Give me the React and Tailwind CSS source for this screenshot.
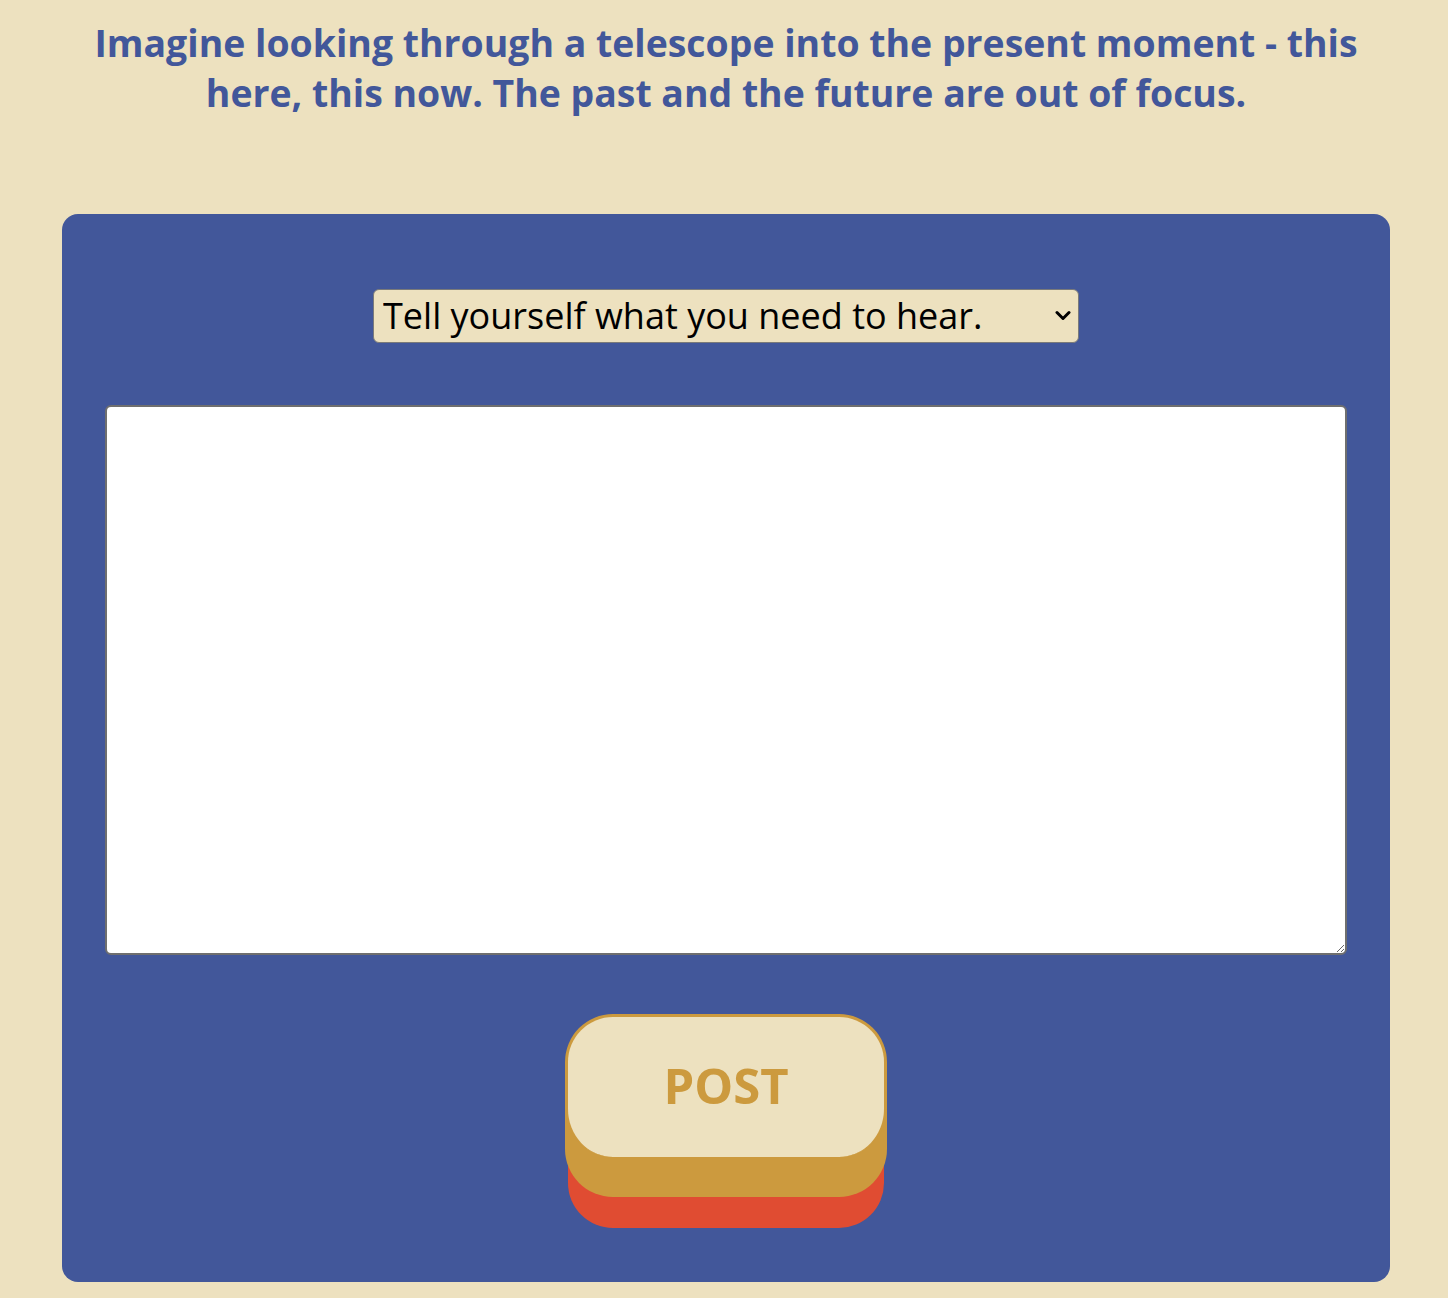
export default function App() {
  return (
    <div className="min-h-[1298px] bg-[#ede1bf] pt-[18px] pb-[16px]" style={{ fontFamily: '"Open Sans", sans-serif' }}>
      <h1 className="ml-[66px] w-[1320px] text-center text-[37.4px] leading-[50px] font-bold text-[#42579a]">
        Imagine looking through a telescope into the present moment - this here, this now. The past and the future are out of focus.
      </h1>
      <div className="ml-[62px] mt-[96px] flex h-[1068px] w-[1328px] flex-col items-center rounded-[16px] bg-[#42579a] px-[43px] pt-[75px]">
        <div className="relative h-[54px] w-[706px]">
          <select
            defaultValue="a"
            className="h-full w-full appearance-none rounded-[6px] border-[1.5px] border-[#7a7a7a] bg-[#ede1bf] pl-[9px] pr-[30px] text-[36px] leading-[48px] text-black"
            style={{ fontFamily: '"Open Sans", sans-serif' }}
          >
            <option value="a">Tell yourself what you need to hear.</option>
          </select>
          <svg
            className="pointer-events-none absolute right-[8px] top-[21px]"
            width="16"
            height="11"
            viewBox="0 0 16 11"
            fill="none"
          >
            <path d="M2 2.5 L8 8.5 L14 2.5" stroke="#000" strokeWidth="3" strokeLinecap="round" strokeLinejoin="round" />
          </svg>
        </div>
        <textarea className="mt-[62px] h-[550px] w-full rounded-[6px] border-2 border-[#6f6f6f] bg-white" />
        <button
          className="mt-[59px] flex h-[143px] w-[322px] items-center justify-center rounded-[48px] border-[3px] border-b-0 border-[#cc9a3e] bg-[#ede1bf] pb-[2px] text-[49px] font-bold text-[#cc9a3e] shadow-[0_40px_0_#cc9a3e,0_74px_0_-3px_#e04c32]"
        >
          POST
        </button>
      </div>
    </div>
  );
}
